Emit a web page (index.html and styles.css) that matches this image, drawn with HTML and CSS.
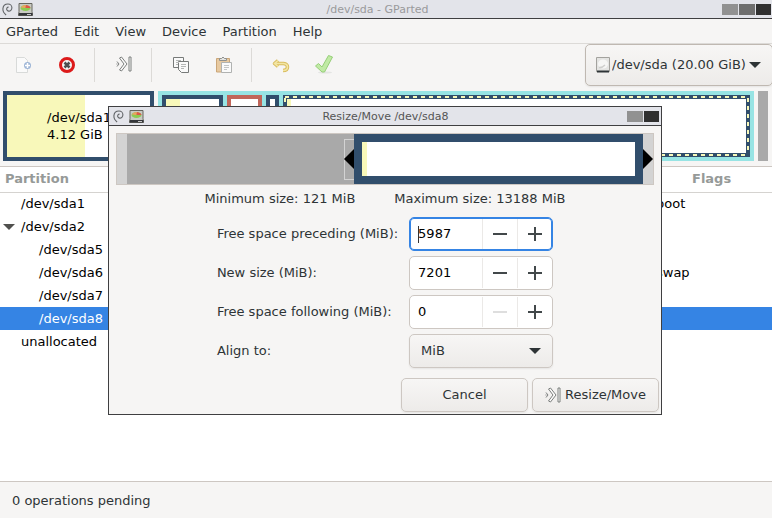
FILE: index.html
```html
<!DOCTYPE html>
<html lang="en">
<head>
<meta charset="utf-8">
<title>/dev/sda - GParted</title>
<link rel="stylesheet" href="styles.css">
</head>
<body>
<svg class="defs" aria-hidden="true">
  <symbol id="swirl" viewBox="0 0 12 14">
    <path d="M4.500 13C2 11 .8 8.500 1 6 1.300 3 3.500 1 6.500 1 9 1 10.800 2.800 10.800 5.200 10.800 7.500 9 9 7.200 8.800 5.500 8.500 4.800 7 5.200 5.700 5.500 4.800 6.300 4.300 7.200 4.500" fill="none" stroke="#606366" stroke-width="1.200"/>
  </symbol>
  <symbol id="drive" viewBox="0 0 15 13">
    <path d="M1 .5h13v8l.5 4H.5l.5-4z" fill="#c9cac4" stroke="#66665f"/>
    <path d="M1 10h13.500v2.500H.5z" fill="#34363a"/>
    <ellipse cx="7.500" cy="5" rx="5" ry="3" fill="#8ccb52"/>
    <path d="M7.500 5L3 4.500Q4 2 8 2z" fill="#f0a060"/>
    <path d="M7.500 5L8 2Q12 2.500 12.500 5z" fill="#e0554a"/>
    <path d="M9 11.500h4" stroke="#c8c8c8"/>
  </symbol>
  <symbol id="resize" viewBox="0 0 16 16">
    <path d="M3.500 2L5.500 1 11 8 5.500 15 3.500 14 8 8zM13 1h2v14h-2z" fill="#fbfbfa" stroke="#7b7e7d"/>
    <path d="M1 5.500l2 2.500-2 2.500M1 7.500v1" fill="none" stroke="#7b7e7d"/>
  </symbol>
  <symbol id="caret" viewBox="0 0 12 6"><path d="M0 0h12L6 6z" fill="#2e3436"/></symbol>
</svg>

<div class="window">
  <header class="titlebar titlebar-main">
    <svg class="swirl"><use href="#swirl"/></svg>
    <svg class="drive"><use href="#drive"/></svg>
    <h1 class="title title-inactive">/dev/sda - GParted</h1>
    <button class="wm wm-light" aria-label="Minimize"></button>
    <button class="wm wm-mid" aria-label="Maximize"></button>
    <button class="wm wm-dark" aria-label="Close"></button>
  </header>

  <nav class="menubar">
    <button>GParted</button><button>Edit</button><button>View</button><button>Device</button><button>Partition</button><button>Help</button>
  </nav>

  <div class="toolbar">
    <div class="tools">
      <button aria-label="New partition" class="tool">
        <svg viewBox="0 0 20 20"><path d="M2.500 3.500h8l3 3v12h-11z" fill="#fafafa" stroke="#d8dad9"/><circle cx="13.500" cy="11.500" r="3.500" fill="#9db5d6"/><path d="M13.500 9v5M11 11.500h5" stroke="#fff" stroke-width="1.500"/></svg>
      </button>
      <button aria-label="Delete partition" class="tool">
        <svg viewBox="0 0 20 20"><circle cx="10" cy="11" r="6.500" fill="#f4f4f2" stroke="#dc1a1a" stroke-width="3"/><path d="M7.500 8.500l5 5M12.500 8.500l-5 5" stroke="#4c4f50" stroke-width="2.500"/></svg>
      </button>
      <span class="sep"></span>
      <button aria-label="Resize or move" class="tool">
        <svg viewBox="0 0 20 20"><use href="#resize" x="2" y="2" width="16" height="16"/></svg>
      </button>
      <span class="sep"></span>
      <button aria-label="Copy" class="tool">
        <svg viewBox="0 0 20 20"><path d="M2.500 3.500h10v10h-10z" fill="#fafafa" stroke="#777a79"/><path d="M7.500 7.500h10v11h-7l-3-3z" fill="#fafafa" stroke="#777a79"/><path d="M5 6.500h5M5 8.500h3M5 10.500h2M10 10.500h5M10 12.500h5M10 14.500h3" stroke="#b5b7b6"/></svg>
      </button>
      <button aria-label="Paste" class="tool">
        <svg viewBox="0 0 20 20"><path d="M2.500 4.500h13v13.500h-13z" fill="#e7c9a0" stroke="#cba678"/><path d="M5.500 6.500v-2h2q1.500-3 3 0h2v2z" fill="#e3e4e2" stroke="#8e908e"/><path d="M7.500 8.500h10v10h-10z" fill="#fafafa" stroke="#b0b2b1"/><path d="M10 11.500h5M10 13.500h5M10 15.500h3" stroke="#c4c6c5"/></svg>
      </button>
      <span class="sep"></span>
      <button aria-label="Undo" class="tool">
        <svg viewBox="0 0 20 20"><path d="M7 6.500L3.500 9.500 7 12.500M4 9.500h8.500q4 .5 4 3.500 0 3.500-4.500 3.500" fill="none" stroke="#d9bd60" stroke-width="3.500" stroke-linejoin="round"/><path d="M7 6.500L3.500 9.500 7 12.500M4 9.500h8.500q4 .5 4 3.500 0 3.500-4.500 3.500" fill="none" stroke="#f3e6a4" stroke-width="1.500"/></svg>
      </button>
      <button aria-label="Apply" class="tool">
        <svg viewBox="0 0 20 20"><ellipse cx="11" cy="18.500" rx="7" ry="1" fill="#e4e5e3"/><path d="M1.500 12L4.500 9.500l3.500 3.500L14.500 1.500l4 1.500-8 15H8z" fill="#c0eaa4" stroke="#96cf78" stroke-linejoin="round"/></svg>
      </button>
    </div>
    <label class="combo combo-disk">
      <svg class="disk-icon" viewBox="0 0 14 16"><path d="M.5.500h13v14H.500z" fill="#e4e4e2" stroke="#a3a29e"/><ellipse cx="7" cy="7" rx="5" ry="4.500" fill="#f6f6f5"/><path d="M3 10.500Q6 11 9 8" fill="none" stroke="#cfcfcd" stroke-width="1.500"/><path d="M1 14.500h12" stroke="#2e3436" stroke-width="2"/></svg>
      <select aria-label="Device"><option>/dev/sda (20.00 GiB)</option></select>
      <svg class="caret"><use href="#caret"/></svg>
    </label>
  </div>

  <div class="diskmap">
    <div class="part part-sda1"><p class="part-label">/dev/sda1<br>4.12 GiB</p></div>
    <div class="extended">
      <div class="part part-sda5"></div>
      <div class="part part-sda6"></div>
      <div class="part part-sda7"></div>
      <div class="part-selected"><div class="part-fill"></div></div>
    </div>
    <div class="unallocated"></div>
  </div>

  <div class="list">
    <table>
      <thead><tr><th class="col-name">Partition</th><th class="col-flags"><span class="flags-head">Flags</span></th></tr></thead>
      <tbody>
        <tr><td class="lvl1">/dev/sda1</td><td>boot</td></tr>
        <tr><td class="lvl1 parent"><svg class="expander" viewBox="0 0 12 6"><path d="M0 0h12L6 6z" fill="#50504e"/></svg>/dev/sda2</td><td></td></tr>
        <tr><td class="lvl2">/dev/sda5</td><td></td></tr>
        <tr><td class="lvl2">/dev/sda6</td><td>swap</td></tr>
        <tr><td class="lvl2">/dev/sda7</td><td></td></tr>
        <tr class="selected"><td class="lvl2">/dev/sda8</td><td></td></tr>
        <tr><td class="lvl1">unallocated</td><td></td></tr>
      </tbody>
    </table>
  </div>

  <footer class="status">0 operations pending</footer>
</div>

<div class="dialog" role="dialog" aria-labelledby="dialog-title">
  <header class="titlebar">
    <svg class="swirl"><use href="#swirl"/></svg>
    <svg class="drive"><use href="#drive"/></svg>
    <h2 class="title" id="dialog-title">Resize/Move /dev/sda8</h2>
    <button class="wm wm-light" aria-label="Maximize"></button>
    <button class="wm wm-dark" aria-label="Close"></button>
  </header>
  <div class="resizer">
    <div class="before"><div class="grip"><svg viewBox="0 0 10 20"><path d="M10 0v20L0 10z"/></svg></div></div>
    <div class="target"></div>
    <div class="after"><svg viewBox="0 0 10 20"><path d="M0 0v20L10 10z"/></svg></div>
  </div>
  <div class="limits"><span>Minimum size: 121 MiB</span><span>Maximum size: 13188 MiB</span></div>
  <form class="form">
    <label for="preceding">Free space preceding (MiB):</label>
    <div class="spin spin-focus"><input id="preceding" type="text" value="5987"><button type="button" aria-label="Decrease" class="step minus"></button><button type="button" aria-label="Increase" class="step plus"></button></div>
    <label for="size">New size (MiB):</label>
    <div class="spin"><input id="size" type="text" value="7201"><button type="button" aria-label="Decrease" class="step minus"></button><button type="button" aria-label="Increase" class="step plus"></button></div>
    <label for="following">Free space following (MiB):</label>
    <div class="spin"><input id="following" type="text" value="0"><button type="button" aria-label="Decrease" class="step minus" disabled></button><button type="button" aria-label="Increase" class="step plus"></button></div>
    <label for="align">Align to:</label>
    <div class="combo"><select id="align"><option>MiB</option></select><svg class="caret"><use href="#caret"/></svg></div>
  </form>
  <div class="actions">
    <button class="action">Cancel</button>
    <button class="action"><svg class="action-icon"><use href="#resize"/></svg>Resize/Move</button>
  </div>
</div>
</body>
</html>
```
FILE: styles.css
```css
* { box-sizing: border-box; }

body {
  margin: 0;
  overflow: hidden;
  background: #f6f5f4;
  color: #2e3436;
  font: 13px/16px "DejaVu Sans", sans-serif;
}

button, input, select { font: inherit; color: inherit; }
button { padding: 0; border: 0; background: none; }
svg { display: block; flex: none; }
.defs { position: absolute; width: 0; height: 0; }

.window { display: flex; flex-direction: column; height: 100vh; }

/* Title bars */
.titlebar {
  display: flex;
  align-items: center;
  gap: 1px;
  height: 19px;
  padding: 0 2px 0 4px;
  border-bottom: 1px solid #3f3f41;
  background: #e3e4ea;
}
.titlebar-main { padding: 0 1px 0 2px; }
.swirl { width: 11px; height: 13px; margin-right: 4px; }
.drive { width: 15px; height: 13px; }
.title {
  flex: 1;
  margin: 0;
  padding-top: 2px;
  color: #555;
  font-size: 11px;
  font-weight: normal;
  text-align: center;
}
.title-inactive { color: #9a9a9c; }
.wm { width: 16px; height: 11px; }
.wm-light { background: #919191; }
.wm-mid { background: #6e6e6e; }
.wm-dark { width: 15px; background: #303030; }

/* Menu and toolbar */
.menubar {
  display: flex;
  gap: 16px;
  height: 25px;
  padding: 2px 0 0 6px;
  border-bottom: 1px solid #dcdad7;
}
.toolbar { display: flex; justify-content: space-between; height: 42px; }
.tools { display: flex; align-items: center; padding-left: 2px; }
.tool { display: grid; place-items: center; width: 43px; height: 40px; padding-bottom: 2px; }
.tool svg { width: 20px; height: 20px; }
.sep { width: 1px; height: 34px; margin: 0 7px 0 6px; background: #dcdad7; }

/* Drop-downs */
.combo {
  display: flex;
  align-items: center;
  height: 34px;
  padding: 0 11px;
  border: 1px solid #cdc7c2;
  border-radius: 5px;
  background: linear-gradient(#f7f6f5, #edebe9);
  box-shadow: 0 1px 2px rgba(0, 0, 0, 0.07);
}
.combo select {
  flex: 1;
  min-width: 0;
  padding: 0;
  border: 0;
  background: none;
  appearance: none;
}
.combo-disk { width: 188px; height: 42px; margin-right: -1px; padding: 0 11px 0 10px; gap: 2px; border-color: #bfb8b1; }
.disk-icon { width: 14px; height: 16px; }
.caret { width: 12px; height: 6px; }

/* Disk map */
.diskmap { display: flex; gap: 4px; height: 80px; padding: 5px 4px 5px 3px; }
.part { border: 4px solid #314e6c; background: #fff; }
.part-sda1 {
  width: 151px;
  padding: 14px 0 0 40px;
  background: linear-gradient(90deg, #f8f8ba 78px, #fff 78px);
}
.part-label { margin: 0; color: #000; line-height: 17px; white-space: nowrap; }
.extended { display: flex; flex: 1; gap: 4px; border: 4px solid #97e4e4; background: #97e4e4; }
.part-sda5 { width: 61px; background: linear-gradient(90deg, #f8f8ba 14px, #fff 14px); }
.part-sda6 { width: 35px; border-color: #c1665a; }
.part-sda7 { width: 13px; }
.part-selected {
  flex: 1;
  padding: 3px;
  border: 1px solid #314e6c;
  background:
    repeating-linear-gradient(90deg, #314e6c 0 1px, #f8f8ba 1px 5px, #314e6c 5px 8px) top / 100% 2px no-repeat,
    repeating-linear-gradient(90deg, #314e6c 0 1px, #f8f8ba 1px 5px, #314e6c 5px 8px) bottom / 100% 2px no-repeat,
    repeating-linear-gradient(#314e6c 0 2px, #f8f8ba 2px 6px, #314e6c 6px 8px) left / 2px 100% no-repeat,
    repeating-linear-gradient(#314e6c 0 2px, #f8f8ba 2px 6px, #314e6c 6px 8px) right / 2px 100% no-repeat,
    #314e6c;
}
.part-fill { height: 100%; background: linear-gradient(90deg, #f8f8ba 4px, #fff 4px); }
.unallocated { width: 10px; background: #a9a9a9; }

/* Partition list */
.list {
  flex: 1;
  border: solid #cdc7c2;
  border-width: 1px 0;
  background: #fff;
  color: #000;
}
table { width: 100%; border-collapse: collapse; table-layout: fixed; }
th { height: 25px; padding: 0 5px; border-bottom: 1px solid #d5d3d0; color: #969a98; text-align: left; }
td { height: 23px; padding: 0; }
.col-name { width: 656px; }
.flags-head { display: block; padding-left: 31px; }
.lvl1 { padding-left: 21px; }
.lvl2 { padding-left: 39px; }
.parent { position: relative; }
.expander { position: absolute; top: 9px; left: 3px; width: 12px; height: 6px; }
.selected { background: #3584e4; color: #fff; }

.status { height: 36px; padding: 11px 12px; }

/* Resize dialog */
.dialog {
  position: absolute;
  top: 106px;
  left: 108px;
  width: 554px;
  border: 1px solid #3f3f41;
  background: #f6f5f4;
}
.resizer {
  display: flex;
  height: 52px;
  margin: 7px 7px 6px;
  border: 1px solid #cdc7c2;
  background: #d3d3d3;
}
.before { display: flex; flex: 1; align-items: center; justify-content: flex-end; margin-left: 10px; background: #a9a9a9; }
.grip { display: flex; align-items: center; width: 10px; height: 41px; border: solid #d3d3d3; border-width: 1px 0 1px 1px; }
.grip svg { width: 10px; height: 20px; margin-left: -1px; }
.target { width: 289px; border: 8px solid #314e6c; background: linear-gradient(90deg, #f8f8ba 5px, #fff 5px); }
.after { display: flex; align-items: center; width: 10px; }
.after svg { width: 10px; height: 20px; }
.limits { display: flex; justify-content: center; gap: 39px; margin-bottom: 10px; line-height: 16px; }
.form {
  display: grid;
  grid-template-columns: max-content 144px;
  gap: 5px 11px;
  align-items: center;
  justify-content: center;
}
.spin {
  display: flex;
  height: 34px;
  border: 1px solid #cdc7c2;
  border-radius: 5px;
  background: #fff;
  color: #000;
}
.spin input { flex: 1; min-width: 0; padding: 0 8px; border: 0; background: none; outline: none; }
.spin-focus { border-color: #3584e4; box-shadow: inset 0 0 0 1px #3584e4; }
.spin-focus input { background: linear-gradient(#333, #333) 8px center / 1px 17px no-repeat; }
.step {
  width: 35px;
  margin: 1px 0;
  border-left: 1px solid #ebe9e7;
  background: linear-gradient(#42484a, #42484a) center / 14px 2px no-repeat;
}
.plus {
  background:
    linear-gradient(#42484a, #42484a) center / 14px 2px no-repeat,
    linear-gradient(#42484a, #42484a) center / 2px 14px no-repeat;
}
.step:disabled { background-image: linear-gradient(#dedede, #dedede); }
.actions { display: flex; justify-content: flex-end; gap: 4px; padding: 10px 2px 2px; }
.action {
  display: flex;
  align-items: center;
  justify-content: center;
  gap: 4px;
  width: 127px;
  height: 34px;
  border: 1px solid #cdc7c2;
  border-radius: 5px;
  background: linear-gradient(#f7f6f5, #edebe9);
  box-shadow: 0 1px 2px rgba(0, 0, 0, 0.07);
}
.action-icon { width: 16px; height: 16px; }
```
